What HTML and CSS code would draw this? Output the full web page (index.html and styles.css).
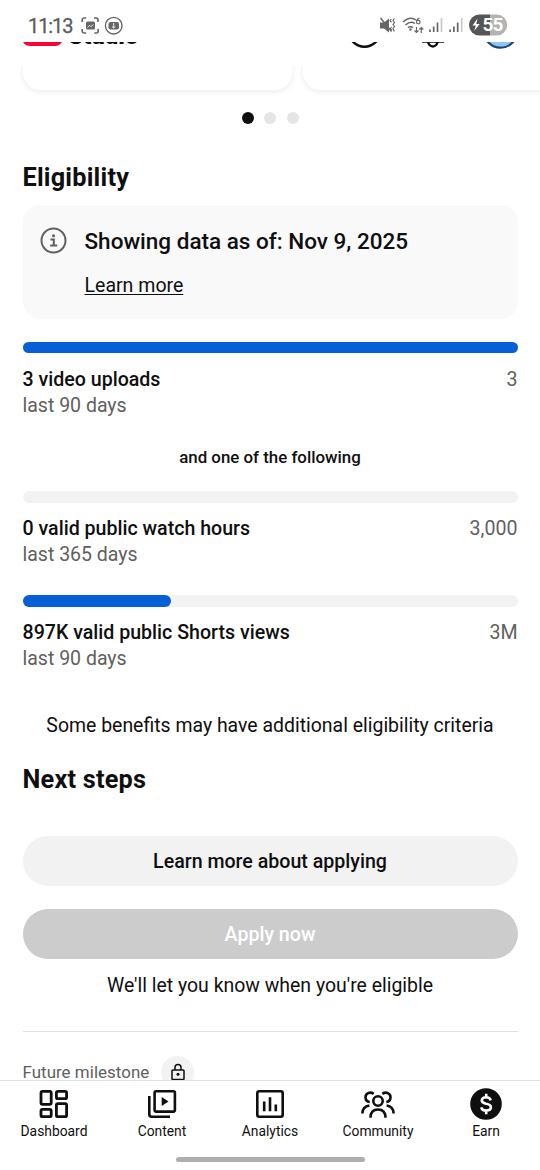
FILE: index.html
```html
<!DOCTYPE html>
<html lang="en">
<head>
<meta charset="utf-8">
<title>Studio – Earn</title>
<link rel="stylesheet" href="styles.css">
</head>
<body>
<div class="screen">
  <header class="status">
    <span class="clock">11:13</span>
    <svg class="status-left" width="46" height="22" viewBox="80 15 46 22" fill="none" stroke="#666" stroke-width="1.6">
      <path d="M82.200 22v-2q0-2 2-2h2M94 18h2q2 0 2 2v2M98.200 29v2q0 2-2 2h-2M86.200 33h-2q-2 0-2-2v-2"/>
      <rect x="86" y="21.500" width="9" height="8" rx="1.500" fill="#666" stroke="none"/>
      <path d="M87.500 27.500l2-2 1.500 1 2.500-2" stroke="#fff" stroke-width=".8"/>
      <circle cx="113.700" cy="25.700" r="8.300" stroke-width="1.400"/>
      <rect x="108.500" y="22" width="10.500" height="7.400" rx="2" fill="#666" stroke="none"/>
      <path d="M113.700 23v5M112 26.500l1.700 1.500 1.700-1.500" stroke="#fff" stroke-width=".9"/>
    </svg>
    <svg class="status-right" width="130" height="26" viewBox="378 12 130 26" fill="none" stroke="#666" stroke-width="1.500">
      <path d="M380 22.500h4l5-4v14l-5-4h-4z" fill="#666" stroke="none"/>
      <path d="M380.500 18l11 13.500"/>
      <path d="M391.300 19l-1.300 1.700 1.500 1.700M391.500 27l-1 1.500 1.300 2M394.300 18.500l-1.300 2 1.500 2-1.500 2 1.500 2-1.500 2 1.300 3" stroke-width="1.200"/>
      <path d="M403 22q7-6.500 13-2M405.500 25q5-4.500 9.500-1.500M408 27.700q2.500-2 5 0" stroke-width="1.500"/>
      <circle cx="410.500" cy="29.500" r="1.200" fill="#666" stroke="none"/>
      <path d="M419.500 18q-3 1-3 4a1.800 1.800 0 1 0 3.600 0q0-2-3.400-1.500" stroke-width="1.200"/>
      <path d="M416.500 27v5.500m-2-2l2 2 2-2M421.300 33v-5.500m-2 2l2-2 2 2" stroke-width="1.200"/>
      <path d="M430 29.500v2.500M433.700 26.500v5.500M437.500 22.500v9.500M450.200 29.500v2.500M453.900 26.500v5.500M457.700 22.500v9.500" stroke-width="1.700"/>
      <path d="M441.500 18v14M461.700 18v14" stroke="#c8c8c8" stroke-width="1.700"/>
      <path d="M479.500 14.500H490v21h-10.500a10.500 10.500 0 0 1 0-21z" fill="#555" stroke="none"/>
      <path d="M490 14.500h6.700a10.500 10.500 0 0 1 0 21H490z" fill="#b3b3b3" stroke="none"/>
      <path d="M477.500 18.500l-5 7h3.300l-1.600 5.500 5.500-7h-3.400z" fill="#fff" stroke="none"/>
      <text class="battery" x="482.500" y="31.300">55</text>
    </svg>
  </header>

  <div class="appbar">
    <span class="logo"></span><span class="brand">Studio</span>
    <svg class="appbar-icons" width="190" height="24" viewBox="350 42 190 24" fill="none" stroke="#0f0f0f" stroke-width="2.500">
      <circle cx="364.500" cy="31" r="15.700"/>
      <path d="M422 41.500h22M428.200 41.500a4.500 4.800 0 0 0 9.200 0"/>
      <circle cx="500.500" cy="31" r="16.700" fill="#91c4ef" stroke="#164676" stroke-width="2.200"/>
    </svg>
  </div>

  <main class="content">
    <div class="carousel"><div class="card"></div><div class="card"></div></div>
    <div class="dots"><i class="dot on"></i><i class="dot"></i><i class="dot"></i></div>

    <div class="body">
      <h2 class="heading">Eligibility</h2>
      <section class="notice">
        <svg class="info" width="28" height="28" viewBox="0 0 28 28" fill="none" stroke="#606060" stroke-width="2">
          <circle cx="14.500" cy="13.500" r="12"/>
          <path d="M11.500 12.400h3.300v6M11.200 18.400h7"/><circle cx="14.500" cy="8.800" r="1.500" fill="#606060" stroke="none"/>
        </svg>
        <div class="notice-text">
          <div class="notice-title">Showing data as of: Nov 9, 2025</div>
          <a class="learn">Learn more</a>
        </div>
      </section>

      <section class="metric first">
        <div class="track"><div class="fill" style="width:100%"></div></div>
        <div class="row"><span class="name">3 video uploads</span><span class="goal">3</span></div>
        <div class="period">last 90 days</div>
      </section>
      <p class="either">and one of the following</p>
      <section class="metric">
        <div class="track"></div>
        <div class="row"><span class="name">0 valid public watch hours</span><span class="goal">3,000</span></div>
        <div class="period">last 365 days</div>
      </section>
      <section class="metric last">
        <div class="track"><div class="fill" style="width:29.9%"></div></div>
        <div class="row"><span class="name">897K valid public Shorts views</span><span class="goal">3M</span></div>
        <div class="period">last 90 days</div>
      </section>

      <p class="note">Some benefits may have additional eligibility criteria</p>
      <h2 class="heading next">Next steps</h2>
      <button class="btn">Learn more about applying</button>
      <button class="btn disabled">Apply now</button>
      <p class="note know">We'll let you know when you're eligible</p>
      <div class="milestone">
        <span>Future milestone</span>
        <span class="lock"><svg width="16" height="18" viewBox="0 0 16 18" fill="none" stroke="#0f0f0f" stroke-width="1.500"><rect x="2" y="7" width="12" height="9.500" rx=".8"/><path d="M5 7V4.500a3 3 0 0 1 6 0V7"/><circle cx="8" cy="11.300" r="1.500" fill="#0f0f0f" stroke="none"/></svg></span>
      </div>
    </div>
  </main>

  <nav class="nav">
    <div class="tab">
      <svg width="34" height="34" viewBox="0 0 34 34" fill="none" stroke="#0f0f0f" stroke-width="2.800"><rect x="4" y="4.300" width="10.200" height="13" rx="1.500"/><rect x="19.400" y="4.300" width="10.200" height="7.400" rx="1.500"/><rect x="4" y="22.300" width="10.200" height="7.400" rx="1.500"/><rect x="19.400" y="16.700" width="10.200" height="13" rx="1.500"/></svg>
      <span>Dashboard</span>
    </div>
    <div class="tab">
      <svg width="34" height="34" viewBox="0 0 34 34" fill="none" stroke="#0f0f0f" stroke-width="2.600"><rect x="9.600" y="4.300" width="20.300" height="20.300" rx="1.500"/><path d="M4.300 9v18.200q0 2.500 2.500 2.500H25"/><path d="M16.700 10v9l6.800-4.500z" fill="#0f0f0f" stroke="none"/></svg>
      <span>Content</span>
    </div>
    <div class="tab">
      <svg width="34" height="34" viewBox="0 0 34 34" fill="none" stroke="#0f0f0f" stroke-width="2.600"><rect x="4.300" y="4.300" width="25.400" height="25.400" rx="2"/><path d="M11.200 14.500v9.700M17 10.300v13.900M22.800 17.500v6.700"/></svg>
      <span>Analytics</span>
    </div>
    <div class="tab">
      <svg width="36" height="34" viewBox="0 0 36 34" fill="none" stroke="#0f0f0f" stroke-width="2.600"><circle cx="18" cy="14" r="4.700"/><path d="M10.500 30.800c0-5.500 3-8.300 7.500-8.300s7.500 2.800 7.500 8.300"/><path d="M13.700 6.800c-4-2.600-8.200-.2-8.200 3.500 0 2.500 1.700 4.400 4.200 4.700M22.300 6.800c4-2.600 8.200-.2 8.200 3.500 0 2.500-1.700 4.400-4.200 4.700M2.400 26.500c0-4.500 2.500-7.300 7-8M33.600 26.500c0-4.500-2.500-7.300-7-8"/></svg>
      <span>Community</span>
    </div>
    <div class="tab">
      <svg width="34" height="34" viewBox="0 0 34 34" fill="none" stroke="#fff" stroke-width="2.600"><circle cx="17" cy="17" r="15.800" fill="#0f0f0f" stroke="none"/><path d="M21.700 13.300q-.8-3-4.500-3-4.400.1-4.400 3.300 0 2.300 4.200 3.200 4.900.8 4.900 3.500 0 3.200-4.700 3.300-4.200 0-5-3.200M17.200 6.700v3.600M17.200 23.600v3.700"/></svg>
      <span>Earn</span>
    </div>
  </nav>
  <div class="gesture"><i></i></div>
</div>
</body>
</html>
```
FILE: styles.css
```css
* { box-sizing: border-box; }
body { margin: 0; background: #fff; color: #0f0f0f; font-family: Roboto, "Liberation Sans", sans-serif; }
p, h2 { margin: 0; }
.screen { width: 540px; height: 1170px; display: flex; flex-direction: column; overflow: hidden; }

.status { height: 42px; flex: none; display: flex; align-items: flex-start; padding: 0 32px 0 28px; }
.clock { width: 52px; line-height: 24px; margin-top: 14px; font-size: 20px; color: #5c5c5c; letter-spacing: -1.1px; white-space: nowrap; -webkit-text-stroke: .3px #5c5c5c; }
.status-left { margin-top: 15px; }
.status-right { margin: 12px 0 0 auto; }
.battery { font: 700 19px Roboto, sans-serif; letter-spacing: -.8px; fill: #fff; stroke: none; }

.appbar { height: 24px; flex: none; display: flex; align-items: flex-start; overflow: hidden; padding-left: 22px; }
.logo { width: 41px; height: 28px; margin-top: -24px; border-radius: 8px; background: #f03; }
.brand { margin: -21px 0 0 5px; font-size: 24px; line-height: 30px; font-weight: 900; letter-spacing: 0; }
.appbar-icons { margin-left: auto; }

.content { height: 1014px; flex: none; overflow: hidden; }
.carousel { height: 42px; display: flex; gap: 11px; padding-left: 22.500px; overflow: hidden; }
.card { flex: none; width: 269px; height: 53.500px; margin-top: -30px; border-radius: 17px; background: #fff; box-shadow: 0 2px 6px rgba(0,0,0,.08); }
.dots { height: 20px; display: flex; justify-content: center; align-items: center; gap: 10.500px; padding-left: .6px; }
.dot { width: 12px; height: 12px; border-radius: 50%; background: #e5e5e5; }
.dot.on { background: #0f0f0f; }

.body { padding: 34.500px 22.500px 0; }
.heading { height: 30px; line-height: 30px; font-size: 25.300px; font-weight: 700; letter-spacing: .2px; }
.notice { height: 114px; margin-top: 12.500px; padding: 22px 17px; display: flex; gap: 17px; border-radius: 17px; background: #f9f9f9; }
.info { flex: none; margin-left: -.5px; }
.notice-title { margin-left: .5px; line-height: 28px; font-size: 22.500px; font-weight: 500; white-space: nowrap; }
.learn { display: block; margin: 18px 0 0 .5px; line-height: 26px; font-size: 19.550px; text-decoration: underline; text-underline-offset: 2px; text-decoration-thickness: 1px; }

.metric { height: 77px; }
.first { margin-top: 22.500px; }
.track { height: 11.500px; border-radius: 6px; background: #f2f2f2; }
.fill { height: 100%; border-radius: 6px; background: #065fd4; }
.row { display: flex; justify-content: space-between; margin-top: 13.500px; line-height: 26px; font-size: 19.600px; font-weight: 500; }
.goal { color: #606060; font-weight: 400; }
.period { line-height: 26.500px; font-size: 19.500px; color: #606060; }
.either { margin: 25px 0 21.500px; line-height: 26px; font-size: 16.850px; font-weight: 500; text-align: center; }
.last { margin-top: 27px; }
.note { margin-top: 39.500px; line-height: 28px; font-size: 19.450px; text-align: center; white-space: nowrap; }
.next { margin-top: 25px; }
.btn { display: block; width: 100%; height: 50px; margin-top: 41px; padding: 1px 0 0; border: 0; border-radius: 25px; background: #f2f2f2; color: #0f0f0f; font: 500 19.600px Roboto, sans-serif; }
.disabled { margin-top: 23px; background: #ccc; color: #fff; }
.know { margin-top: 13px; }
.milestone { margin-top: 31px; padding-top: 24px; border-top: 1px solid #e0e0e0; display: flex; align-items: center; gap: 12px; font-size: 16.900px; color: #606060; letter-spacing: .05px; }
.lock { width: 33px; height: 33px; border-radius: 50%; background: #f2f2f2; display: flex; align-items: center; justify-content: center; }

.nav { height: 70px; flex: none; border-top: 1px solid #e0e0e0; display: grid; grid-template-columns: repeat(5, 1fr); background: #fff; }
.tab { display: flex; flex-direction: column; align-items: center; padding-top: 6px; font-size: 13.850px; line-height: 20px; }
.gesture { display: flex; justify-content: center; padding-top: 7px; }
.gesture i { width: 189px; height: 5px; border-radius: 3px; background: #afafaf; }
```
